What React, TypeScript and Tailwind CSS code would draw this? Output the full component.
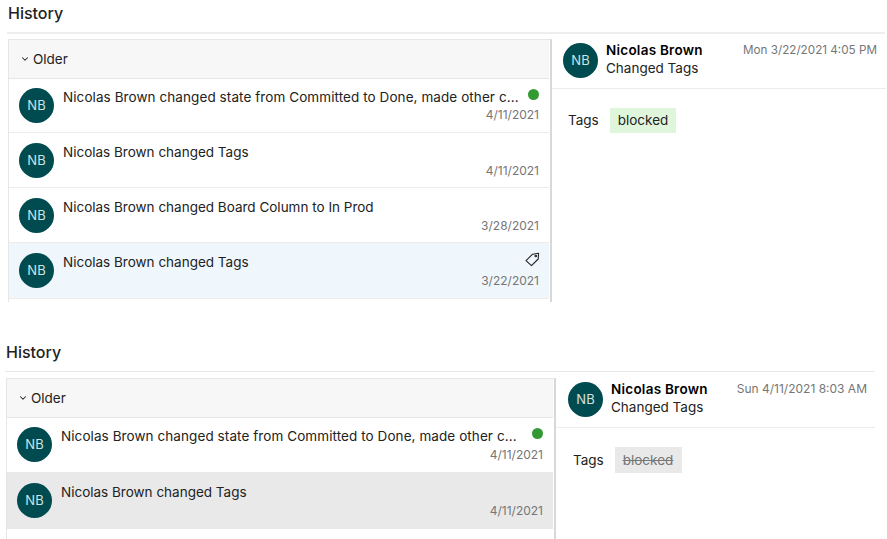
import { ChevronDown } from 'lucide-react';

type Row = {
  text: string;
  date: string;
  dot?: boolean;
  tag?: boolean;
  rowClass: string;
  dateClass: string;
  textClass?: string;
};

function Avatar() {
  return (
    <div className="flex h-[35px] w-[35px] shrink-0 items-center justify-center rounded-full bg-[#004b50] text-[13px] text-[#d2e2e2]">
      NB
    </div>
  );
}

function TagIcon() {
  return (
    <svg width="15" height="15" viewBox="0 0 15 15" fill="none" stroke="#222" strokeWidth="1.1" strokeLinejoin="round">
      <path d="M1 8.6 L7.6 2.2 L13.6 1.2 L13.2 7 L6.5 13.6 Z" />
      <circle cx="10.8" cy="4" r="0.8" />
    </svg>
  );
}

function HistoryRow({ row }: { row: Row }) {
  return (
    <div className={`flex gap-[9px] pl-[10px] pr-[10px] ${row.rowClass}`}>
      <Avatar />
      <div className="min-w-0 flex-1">
        <div className="flex h-[18px] justify-between">
          <span className={`whitespace-nowrap text-[13.5px] leading-[18px] text-[#222] ${row.textClass ?? ''}`}>{row.text}</span>
          {row.dot && <span className="mt-[1px] h-[11px] w-[11px] rounded-full bg-[#339933]" />}
          {row.tag && <span className="-mr-[1px] -mt-[1px]"><TagIcon /></span>}
        </div>
        <div className={`text-right text-[12px] leading-[16px] text-[#767676] ${row.dateClass}`}>{row.date}</div>
      </div>
    </div>
  );
}

function HistoryBlock(props: {
  className: string;
  lineClass: string;
  listClass: string;
  paneClass: string;
  headClass: string;
  tagsClass: string;
  rows: Row[];
  when: string;
  whenClass: string;
  tagClass: string;
  tagTextClass: string;
}) {
  return (
    <section className={props.className}>
      <h2 className="text-[16px] font-medium leading-[20px] text-[#222]">History</h2>
      <div className={props.lineClass} />
      <div className="flex">
        <div className={props.listClass}>
          <div className="flex h-[39px] items-center gap-[3px] border-b border-[#e6e6e6] bg-[#f7f7f7] pl-[11px] text-[13.5px] text-[#222]">
            <ChevronDown size={10} strokeWidth={2.5} />
            Older
          </div>
          {props.rows.map((row) => (
            <HistoryRow key={row.text + row.date} row={row} />
          ))}
        </div>
        <div className={props.paneClass}>
          <div className={`flex h-[50px] items-start border-b border-[#ececec] pt-[4px] ${props.headClass}`}>
            <Avatar />
            <div className="-mt-[2px] ml-[8px] text-[13.5px] leading-[18px] text-[#222]">
              <div className="font-semibold tracking-[0.25px] text-black">Nicolas Brown</div>
              <div>Changed Tags</div>
            </div>
            <span className={props.whenClass}>{props.when}</span>
          </div>
          <div className={`mt-[19px] flex items-center gap-[11px] text-[13.5px] text-[#222] ${props.tagsClass}`}>
            <span>Tags</span>
            <span className={props.tagClass}>
              <span className={props.tagTextClass}>blocked</span>
            </span>
          </div>
        </div>
      </div>
    </section>
  );
}

export default function App() {
  return (
    <div className="h-[539px] w-[887px] overflow-hidden bg-white font-['Inter',sans-serif]">
      <HistoryBlock
        className="h-[340px] pl-[8px] pt-[3px]"
        lineClass="-ml-[1px] mb-[5px] mt-[9px] h-[2px] w-[878px] bg-[#eeeeee]"
        listClass="h-[263px] w-[544px] border-l border-r-2 border-t border-[#e6e6e6] border-r-[#d8d8d8] pr-[1px]"
        paneClass="w-[334px]"
        headClass="pl-[11px]"
        tagsClass="pl-[16px]"
        rows={[
          { text: 'Nicolas Brown changed state from Committed to Done, made other c...', date: '4/11/2021', dot: true, rowClass: 'h-[54px] border-b border-[#ececec] pt-[9px]', dateClass: 'mt-[1px]', textClass: 'tracking-[0.08px]' },
          { text: 'Nicolas Brown changed Tags', date: '4/11/2021', rowClass: 'h-[55px] border-b border-[#ececec] pt-[10px]', dateClass: 'mt-[2px]' },
          { text: 'Nicolas Brown changed Board Column to In Prod', date: '3/28/2021', rowClass: 'h-[55px] border-b border-[#ececec] pt-[10px]', dateClass: 'mt-[2px]' },
          { text: 'Nicolas Brown changed Tags', date: '3/22/2021', tag: true, rowClass: 'h-[56px] border-b border-[#ececec] bg-[#eff6fc] pt-[10px]', dateClass: 'mt-[2px]' },
        ]}
        when="Mon 3/22/2021 4:05 PM"
        whenClass="ml-auto -mt-[1px] pr-[9px] text-[11.7px] leading-[16px] text-[#767676]"
        tagClass="flex h-[25px] items-center bg-[#dff6dd] px-[8px]"
        tagTextClass="text-[#222]"
      />
      <HistoryBlock
        className="pl-[6px] pt-[2px]"
        lineClass="-ml-[1px] mb-[6px] mt-[9px] h-[1px] w-[869px] bg-[#e6e6e6]"
        listClass="h-[161px] w-[550px] border-l border-r-2 border-t border-[#e6e6e6] border-r-[#d8d8d8] pr-[1px]"
        paneClass="w-[319px]"
        headClass="pl-[12px]"
        tagsClass="pl-[17px]"
        rows={[
          { text: 'Nicolas Brown changed state from Committed to Done, made other c...', date: '4/11/2021', dot: true, rowClass: 'h-[54px] pt-[9px]', dateClass: 'mt-[2px]', textClass: 'tracking-[0.08px]' },
          { text: 'Nicolas Brown changed Tags', date: '4/11/2021', rowClass: 'h-[57px] bg-[#e9e9e9] pt-[11px]', dateClass: 'mt-[2px]' },
        ]}
        when="Sun 4/11/2021 8:03 AM"
        whenClass="ml-auto -mt-[1px] pr-[8px] text-[12px] leading-[16px] text-[#767676]"
        tagClass="flex h-[26px] w-[67px] items-center bg-[#e9e9e9] px-[8px]"
        tagTextClass="text-[#767676] line-through"
      />
    </div>
  );
}
